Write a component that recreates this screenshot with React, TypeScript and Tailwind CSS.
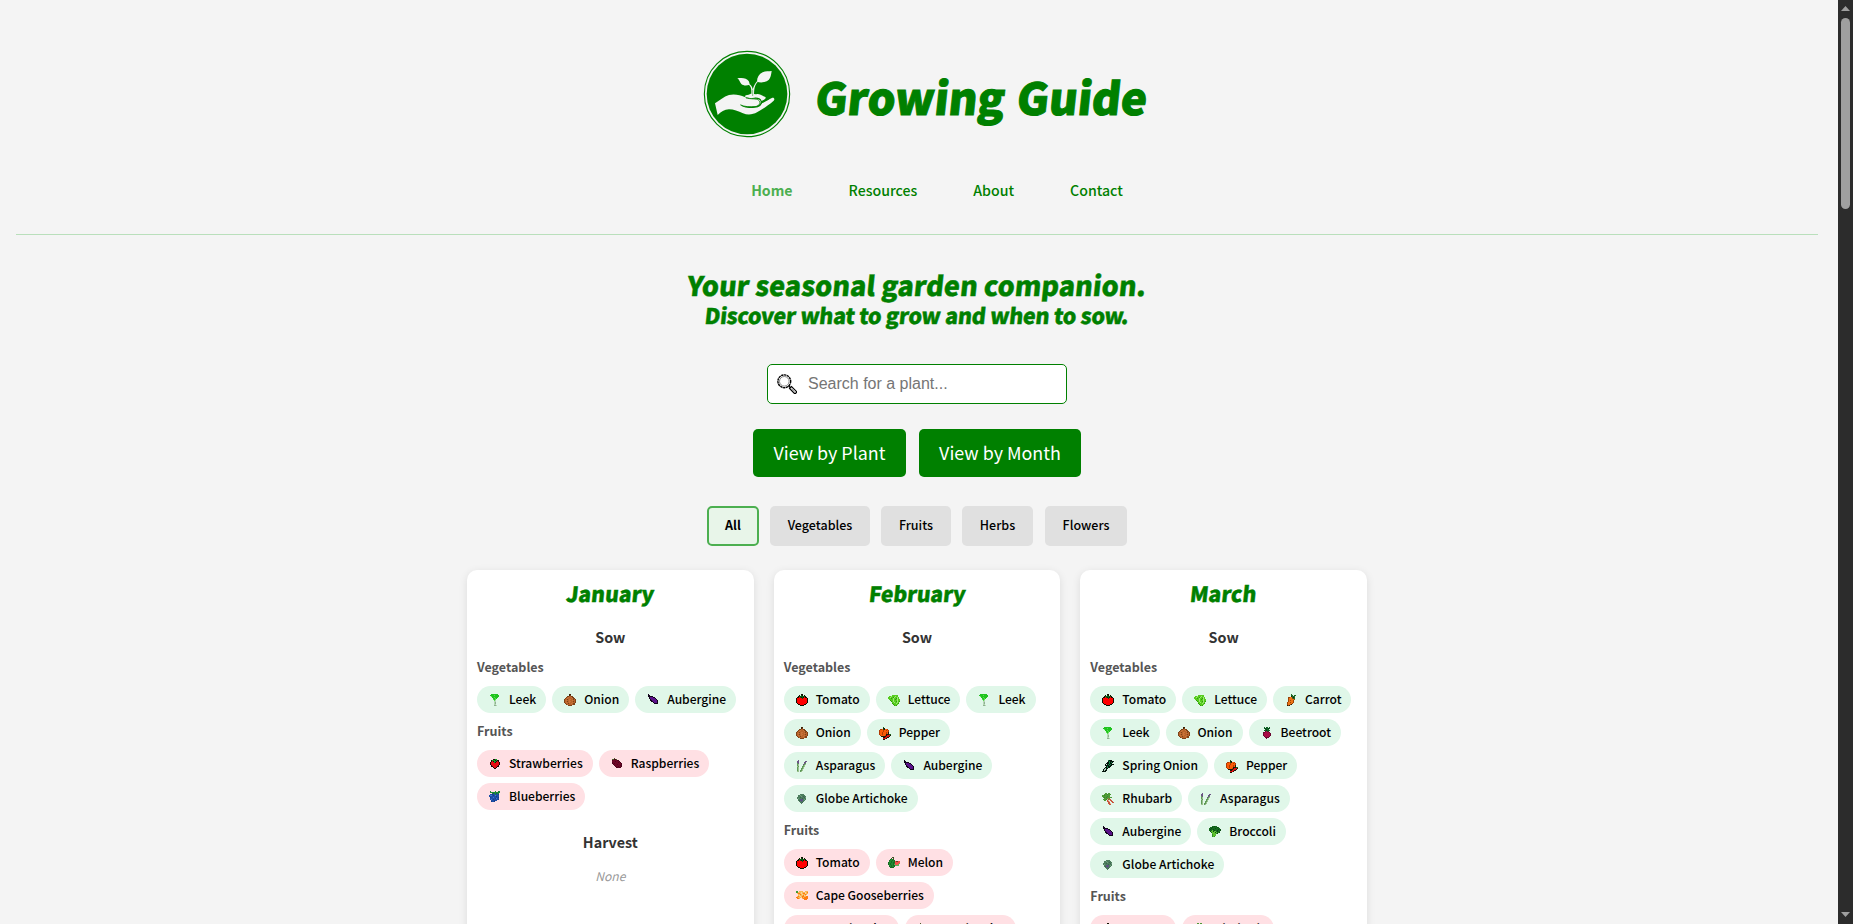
import React from "react";

type Sprite = { colors: Record<string, string>; rows: string[] };

const SPRITES: Record<string, Sprite> = {
  Tomato: {
    colors: { k: "#111100", r: "#ff0000", g: "#0b5a12" },
    rows: [
      ".....kk.....",
      "...k.gk.k...",
      "..kggggggk..",
      ".kkrgkgkrkk.",
      "krrrrrgrrrrk",
      "krrrrrrrrrrk",
      "krrrrrrrrrrk",
      "krrrrrrrrrrk",
      "krrrrrrrrrrk",
      ".krrrrrrrrk.",
      "..kkrrrrkk..",
      "....kkkk....",
    ],
  },
  Lettuce: {
    colors: { g: "#56cc1e", l: "#9be873", d: "#2f9a0c" },
    rows: [
      "............",
      "....gggggg..",
      ".gglggglgg..",
      "gglggdlgglg.",
      "gggdglggdlg.",
      ".gggglgdglgg",
      "..dgglggglgg",
      "...dglggdlgd",
      "....gglgglg.",
      "....dggglgd.",
      ".....dgggg..",
      "......dgd...",
    ],
  },
  Leek: {
    colors: { g: "#1fc41f", l: "#57dc4c", w: "#b5d8b5", s: "#8fb092" },
    rows: [
      "..ggggggg...",
      ".gggglgggg..",
      "..lggggggg..",
      "...gglggg...",
      "....gglg....",
      "....lgl.....",
      ".....lw.....",
      ".....ww.....",
      ".....ws.....",
      ".....ws.....",
      ".....ww.....",
      ".....ssw....",
    ],
  },
  Onion: {
    colors: { o: "#b8632b", d: "#7d4218", l: "#c8733a", k: "#3c2208" },
    rows: [
      ".....kk.....",
      ".....kd.....",
      "...ddoodd...",
      "..dolooldd..",
      ".dolooooldd.",
      "doodolloodod",
      "dolooloolood",
      "doodolloodod",
      "dolooloolood",
      ".doodoolodd.",
      "..doooooodd.",
      "....dddd....",
    ],
  },
  Aubergine: {
    colors: { k: "#12041c", p: "#5a1189", g: "#16351b" },
    rows: [
      ".k..........",
      ".kk.........",
      ".kkkkk......",
      "..kpppkk....",
      "..kpppppk...",
      "...kpppppk..",
      "...kkpppppk.",
      "....kkppppk.",
      "......kpppk.",
      ".......kkkk.",
      "............",
      "............",
    ],
  },
  Strawberries: {
    colors: { k: "#1c0a08", r: "#e90d12", g: "#0f9c20" },
    rows: [
      "............",
      "....kkgg....",
      "..kgggkgkk..",
      "..krkggkrk..",
      ".krrrgkrrrk.",
      ".krrrrrrrrk.",
      ".krrrrrrrrk.",
      "..krrrrrrk..",
      "..kkrrrrkk..",
      "....krrk....",
      ".....kk.....",
      "............",
    ],
  },
  Raspberries: {
    colors: { r: "#6e0626", d: "#4d041d", g: "#4d5c2a" },
    rows: [
      "...g........",
      ".ggddg......",
      ".drrrrdd....",
      ".rrrdrrrd...",
      ".drrrrrdrd..",
      ".drdrrrrrrd.",
      "..drrrdrrrd.",
      "...drrrrrdd.",
      "....drrdrrd.",
      ".....ddrdd..",
      "............",
      "............",
    ],
  },
  Blueberries: {
    colors: { b: "#1c4fa8", l: "#3a7ad6", d: "#163c86", g: "#1c8a36" },
    rows: [
      ".g....g..gg.",
      ".gggggggggg.",
      "...gdggdgg..",
      ".bbdbbgbbd..",
      "bllbdblbbb..",
      "bbbbbbbdbb..",
      ".dbblbbbbd..",
      ".bbbbbdlbb..",
      ".blbdbbbbd..",
      "..bbbdbb....",
      "..dbbd......",
      "............",
    ],
  },
  Pepper: {
    colors: { o: "#fb5a05", d: "#b03a04", k: "#1d1708", g: "#176417", r: "#dc1010" },
    rows: [
      "....g.......",
      "....kk......",
      ".ddogkood...",
      "dooodoodod..",
      "dooodooood..",
      "doodooodok..",
      "doodooodok..",
      "doodoookkkgg",
      ".doooodkrrrk",
      "..kkkkkrrrk.",
      "....kkrrkk..",
      "....rrrk....",
      "....kk......",
    ],
  },
  Asparagus: {
    colors: { g: "#5f9a57", p: "#6b5484", l: "#9bc08e" },
    rows: [
      "..p.........",
      ".pp......pp.",
      ".pp.....pp..",
      ".gp.....pg..",
      ".gl....pgl..",
      ".gl....gl...",
      ".lg...ggl...",
      ".gl...gl....",
      ".gl..ggl....",
      ".gl..gl.....",
      ".gl.ggl.....",
      ".ll.gl......",
    ],
  },
  "Globe Artichoke": {
    colors: { g: "#4c7d5d", d: "#3d6152", l: "#6f9f7c", p: "#5b5380" },
    rows: [
      "............",
      "....gggg....",
      "..gglgggg...",
      "..ggglgdgg..",
      ".gggdgggdl..",
      ".glgggdggg..",
      "..ggpppglg..",
      "..gdpppgg...",
      "...ggpgg....",
      "....ggd.....",
      ".....g......",
      "............",
    ],
  },
  Melon: {
    colors: { g: "#1f8a2f", d: "#156a24", r: "#f2504a", l: "#58b95c", k: "#6b3a2a" },
    rows: [
      "....kd......",
      "...d.k......",
      "..dggd......",
      ".dggdgd.....",
      ".ggdggdrkkrr",
      "dggdgddrrrrr",
      "dgdggdgrrrrl",
      "dgdggdlrrrl.",
      ".ggdgddllll.",
      ".dgdggd.....",
      "..dddd......",
      "............",
    ],
  },
  "Cape Gooseberries": {
    colors: { o: "#ff7a10", y: "#f6b857", l: "#fbd596", g: "#3e9b34" },
    rows: [
      "............",
      "gg.yyyy..yyy",
      "ggyyylyyylyo",
      ".yooylyoolyy",
      "..yyoylyyoy.",
      "..ylyyyoly..",
      ".yoylyooyyoo",
      "ooyyyloyoooo",
      ".ooy..yooooo",
      "........ooo.",
      "............",
      "............",
    ],
  },
  Carrot: {
    colors: { o: "#ee7416", d: "#9a4308", g: "#1b6b25", k: "#2a1c08" },
    rows: [
      "......g.....",
      "......gg.gg.",
      "......kggg..",
      "...ddoogkg..",
      "...dooodgg..",
      "...doooood..",
      "...dodood...",
      "...dooood...",
      "..doodood...",
      "..dooood....",
      "..doodk.....",
      "..kdk.......",
    ],
  },
  Beetroot: {
    colors: { g: "#0e6424", d: "#08431a", r: "#a80b44", k: "#6a0630" },
    rows: [
      "...g.gg.g...",
      "...gdggdg...",
      "....gdgg....",
      "...ggdggg...",
      "....krgk....",
      "..kkrrrrk...",
      "..krrrrrrk..",
      "..krrrrrrk..",
      "..krrrrrrk..",
      "...krrrrk...",
      "....kkkk....",
      ".....k......",
    ],
  },
  "Spring Onion": {
    colors: { k: "#04140c", g: "#0d8a45", w: "#a8c9b4" },
    rows: [
      "......gkkk..",
      "......kgkkkk",
      ".....kkgkgk.",
      "....kkkgkk..",
      "...k.kgkgkkk",
      "...kkkkgkk..",
      "....kgkkk...",
      "...kkgkk....",
      "..kwkk......",
      ".kwwk.......",
      ".kwkk.......",
      "kkkk........",
    ],
  },
  Rhubarb: {
    colors: { g: "#4d9a35", d: "#3c8230", r: "#c9553d", w: "#e8b7a0" },
    rows: [
      "...gg.gg....",
      "..gggdggg...",
      "ggdggggg....",
      "gggggdgg....",
      ".gdgdggggg..",
      "..ggggrg....",
      ".gggdwgrr...",
      "..gg.rw.rr..",
      ".....rrw.rr.",
      "......rr..rr",
      "......rrw...",
      ".......rr...",
    ],
  },
  Broccoli: {
    colors: { g: "#156b1e", d: "#0b4a14", l: "#5cc02e", m: "#2f8f23" },
    rows: [
      "...ggdgg....",
      ".ggdggggdg..",
      "ggdgggdgggg.",
      "gdggdggggdgd",
      "ggglgdggdggd",
      ".dlldllgdgg.",
      "..gllldlgmd.",
      "...llllmd...",
      "...mlll.....",
      "...mlll.....",
      "...mlm......",
      "............",
    ],
  },
};

function PlantIcon({ name }: { name: string }) {
  const sprite = SPRITES[name];
  return (
    <svg viewBox="0 0 16 16" className="block size-4 shrink-0" shapeRendering="crispEdges">
      {sprite.rows.flatMap((row, y) =>
        row.split("").map((c, x) =>
          c === "." ? null : <rect key={`${x}-${y}`} x={x + 2} y={y + 2} width="1" height="1" fill={sprite.colors[c]} />,
        ),
      )}
    </svg>
  );
}

function Logo() {
  return (
    <svg viewBox="26 30 264 264" className="block size-[88px] shrink-0">
      <circle cx="158" cy="162" r="128" fill="none" stroke="#008000" strokeWidth="3.4" />
      <circle cx="158" cy="162" r="121" fill="#008000" />
      <g fill="#f4f4f4">
        <path d="M62 190 C76 181 88 170 104 165 C120 161 138 165 151 171 C160 176 172 176 184 176 C197 176 203 184 197 192 C191 199 180 200 166 200 C155 200 147 198 139 195 C145 203 160 204 176 204 C192 204 201 198 202 190 C212 186 224 177 234 173 C240 172 242 178 238 182 C222 196 204 208 188 217 C176 224 160 226 146 220 C132 214 118 208 104 208 C90 209 80 216 70 225 Z" />
        <path d="M151 169 C156 164 162 166 166 163 C173 159 182 164 188 162 C196 161 202 167 213 171 C216 174 212 178 206 181 L202 183 C199 174 190 172 180 173 C168 174 158 175 151 169 Z" />
        <path d="M129 115 C144 112 157 114 163 123 C165 127 166 131 166 134 C156 138 147 137 141 132 C136 127 136 120 129 115 Z" />
        <path d="M232 93 C230 107 228 119 217 124 C207 128 196 128 188 125 C188 112 194 102 205 97 C214 93 223 94 232 93 Z" />
        <path d="M164 132 C170 134 174 140 175 148 C178 140 181 132 188 124 L190 126 C181 136 179 146 179 168 L171 168 C172 150 171 139 163 134 Z" />
      </g>
      <path d="M175 149 L175 168" stroke="#008000" strokeWidth="1.4" fill="none" />
      <path d="M139 195 C150 201 170 201 182 200 C197 198 201 186 192 180 C186 175 170 178 156 174 M201 191 C206 184 214 181 222 178" stroke="#008000" strokeWidth="2.6" fill="none" strokeLinecap="round" />
    </svg>
  );
}

function SearchIcon() {
  return (
    <svg viewBox="0 0 20 20" className="block size-5 shrink-0">
      <circle cx="7.3" cy="7.3" r="6.4" fill="#fff" stroke="#000" strokeWidth="1.4" strokeDasharray="2.4 .5" />
      <circle cx="7.3" cy="7.3" r="4.8" fill="#fff" stroke="#8a8a8a" strokeWidth="1" />
      <path d="M11.6 12 L13.2 13.4" stroke="#000" strokeWidth="1.6" />
      <path d="M12.6 14.4 L14.5 12.6 L19.4 17.4 L19.4 18.6 L18.6 19.4 L17.4 19.4 Z" fill="#fff" stroke="#000" strokeWidth="1.2" />
      <path d="M14.6 14.8 L17.6 17.7" stroke="#777" strokeWidth=".8" />
    </svg>
  );
}

const display = "font-['Noto_Sans_CJK_SC',sans-serif] font-black text-[#008000] -skew-x-6 whitespace-nowrap";

function Chip({ name, tone }: { name: string; tone: string }) {
  return (
    <li className={`flex h-[27px] items-center gap-1.5 rounded-full px-2.5 text-[12.07px] font-medium whitespace-nowrap text-black ${tone}`}>
      <PlantIcon name={name} />
      <span>{name}</span>
    </li>
  );
}

function Group({ label, names, tone }: { label: string; names: string[]; tone: string }) {
  return (
    <div>
      <h4 className="h-[37px] text-[12.53px] leading-[35px] font-semibold text-[#555555]">{label}</h4>
      <ul className="flex flex-wrap gap-1.5">
        {names.map((n) => (
          <Chip key={n} name={n} tone={tone} />
        ))}
      </ul>
    </div>
  );
}

type Month = { name: string; title: string; vegetables: string[]; fruits: string[]; harvest?: boolean };

const MONTHS: Month[] = [
  {
    name: "January",
    title: "text-[21px]",
    vegetables: ["Leek", "Onion", "Aubergine"],
    fruits: ["Strawberries", "Raspberries", "Blueberries"],
    harvest: true,
  },
  {
    name: "February",
    title: "text-[21px] tracking-[-0.1px]",
    vegetables: ["Tomato", "Lettuce", "Leek", "Onion", "Pepper", "Asparagus", "Aubergine", "Globe Artichoke"],
    fruits: ["Tomato", "Melon", "Cape Gooseberries", "Strawberries", "Raspberries"],
  },
  {
    name: "March",
    title: "text-[21.3px]",
    vegetables: [
      "Tomato", "Lettuce", "Carrot", "Leek", "Onion", "Beetroot", "Spring Onion", "Pepper",
      "Rhubarb", "Asparagus", "Aubergine", "Broccoli", "Globe Artichoke",
    ],
    fruits: ["Tomato", "Rhubarb"],
  },
];

function MonthCard({ month }: { month: Month }) {
  return (
    <section className="h-[800px] min-w-0 flex-1 rounded-[10px] bg-white p-2.5 shadow-[0_2px_8px_rgba(0,0,0,0.1)]">
      <h2 className={`${display} h-7 text-center leading-[26px] [-webkit-text-stroke:0.4px_#008000] ${month.title}`}>{month.name}</h2>
      <h3 className="h-[41px] pt-[19px] text-center text-[14.32px] leading-5 font-bold text-[#333333]">Sow</h3>
      <Group label="Vegetables" names={month.vegetables} tone="bg-[#e0f7e9]" />
      <Group label="Fruits" names={month.fruits} tone="bg-[#ffe0e4]" />
      {month.harvest && (
        <>
          <h3 className="mt-[22px] h-5 text-center text-[14.32px] leading-5 font-bold text-[#333333]">Harvest</h3>
          <p className="mt-3.5 text-center text-[12.1px] leading-5 text-[#999999] italic">None</p>
        </>
      )}
    </section>
  );
}

const NAV = ["Resources", "About", "Contact"];
const FILTERS: [string, string][] = [
  ["Vegetables", "w-[100px]"],
  ["Fruits", "w-[70px]"],
  ["Herbs", "w-[71px]"],
  ["Flowers", "ml-px w-[82px]"],
];

export default function App() {
  return (
    <div className="flex h-screen w-full overflow-hidden bg-[#f4f4f4] font-['Noto_Sans_CJK_SC',sans-serif]">
      <div className="min-w-0 flex-1 overflow-hidden pr-5 pl-4">
        <header className="border-b border-[#b9dfbb] pt-[50px] pb-[34px]">
          <div className="flex h-[88px] items-center justify-center gap-[25px] pl-[17px]">
            <Logo />
            <h1 className={`${display} mt-1 text-[44px] leading-[60px] word-spacing-normal [-webkit-text-stroke:1px_#008000] [word-spacing:2px]`}>Growing Guide</h1>
          </div>
          <nav className="mt-[42px] flex h-5 justify-center gap-14 pl-10 text-[14.15px] leading-5 font-medium text-[#008000]">
            <a className="font-bold text-[#4caf50]">Home</a>
            {NAV.map((n) => (
              <a key={n}>{n}</a>
            ))}
          </nav>
        </header>

        <main>
          <div className="mt-[33px] text-center">
            <p className={`${display} h-8 pt-px text-[27px] leading-8 [-webkit-text-stroke:0.4px_#008000]`}>Your seasonal garden companion.</p>
            <p className={`${display} h-7 pt-px text-[21.5px] leading-7 tracking-[-0.31px] [-webkit-text-stroke:0.4px_#008000]`}>
              Discover what to grow and when to sow.
            </p>
          </div>

          <div className="mx-auto mt-9 flex h-10 w-[300px] items-center gap-[11px] rounded-[5px] border border-[#008000] bg-white pl-[9px]">
            <SearchIcon />
            <span className="font-['Liberation_Sans',sans-serif] text-base text-[#757575]">Search for a plant...</span>
          </div>

          <div className="mt-[25px] flex justify-center gap-[13px] text-[17.9px] text-white">
            <button className="h-12 w-[153px] rounded-[5px] bg-[#008000] pb-0.5">View by Plant</button>
            <button className="h-12 w-[162px] rounded-[5px] bg-[#008000] pb-0.5">View by Month</button>
          </div>

          <div className="mt-[29px] flex h-10 justify-center gap-[11px] text-[12.53px] font-medium text-black">
            <button className="w-[52px] rounded-[5px] border-2 border-[#4caf50] bg-[#e8f5e9] pb-0.5 font-bold">All</button>
            {FILTERS.map(([name, width]) => (
              <button key={name} className={`rounded-[5px] bg-[#e0e0e0] pb-0.5 ${width}`}>
                {name}
              </button>
            ))}
          </div>

          <div className="mx-auto mt-6 flex w-[900px] gap-5">
            {MONTHS.map((m) => (
              <MonthCard key={m.name} month={m} />
            ))}
          </div>
        </main>
      </div>

      <div className="flex w-[15px] shrink-0 flex-col items-center bg-[#2c2c2c]">
        <svg viewBox="0 0 9 5" className="mt-1.5 h-[5px] w-[9px] shrink-0">
          <path d="M0 5 L4.5 0 L9 5 Z" fill="#9f9f9f" />
        </svg>
        <div className="mt-[7px] h-[191px] w-[9px] rounded-full bg-[#9f9f9f]" />
        <svg viewBox="0 0 9 5" className="mt-auto mb-[7px] h-[5px] w-[9px] shrink-0">
          <path d="M0 0 L4.5 5 L9 0 Z" fill="#9f9f9f" />
        </svg>
      </div>
    </div>
  );
}
